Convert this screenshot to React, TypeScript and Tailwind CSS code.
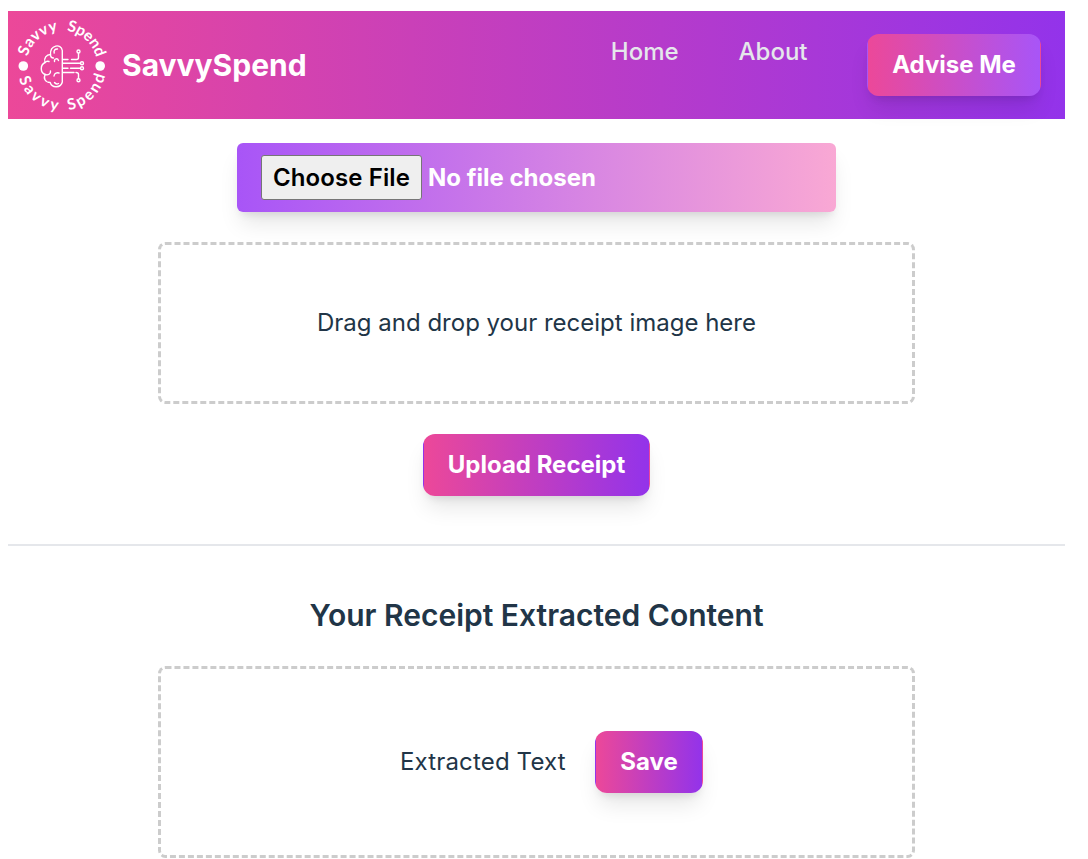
import type { ReactNode } from "react";

function Logo() {
  const arcText = {
    fontFamily: 'Lato, "Open Sans", sans-serif',
    fill: "#fff",
    fontSize: 15.5,
    fontWeight: 700,
    textAnchor: "middle" as const,
  };
  return (
    <svg className="size-[108px] shrink-0" viewBox="0 0 108 108" role="img" aria-label="Savvy Spend">
      <defs>
        <path id="arc-top" d="M18.2 55 A35.5 35.5 0 0 1 89.2 55" />
        <path id="arc-bottom" d="M9.2 55 A44.5 44.5 0 0 0 98.2 55" />
      </defs>
      <text {...arcText} textLength="42" lengthAdjust="spacing">
        <textPath href="#arc-top" startOffset="27.5%">Savvy</textPath>
      </text>
      <text {...arcText} textLength="42" lengthAdjust="spacing">
        <textPath href="#arc-top" startOffset="73.5%">Spend</textPath>
      </text>
      <text {...arcText} textLength="53" lengthAdjust="spacing">
        <textPath href="#arc-bottom" startOffset="28%">Savvy</textPath>
      </text>
      <text {...arcText} textLength="53" lengthAdjust="spacing">
        <textPath href="#arc-bottom" startOffset="74%">Spend</textPath>
      </text>
      <circle cx="15.3" cy="55" r="4.8" fill="#fff" />
      <circle cx="92.2" cy="55" r="4.8" fill="#fff" />
      <g fill="none" stroke="#fff" strokeWidth="1.4" strokeLinecap="round" strokeLinejoin="round">
        <path d="M54.3 39.5 V71 C53 77 44 77.5 42.2 71.5 C37.5 71.5 35 67.5 37.2 63.5 C32 61.5 32 54 37 51.5 C35.5 47 38.5 43.5 42.5 43.5 C42 34 53 32 54.3 39.5 Z" />
        <path d="M46.2 42 C45.5 39.5 47 37.8 49.5 38M42.5 43.5 C42.5 46 44 47 45.5 47M50.5 49.5 C49.5 46.8 46 47.5 46.5 50.5M37 51.5 C38 50.3 39.5 50 41 50.5M37.2 63.5 C40 64.5 43 63 42.5 60M46 65 C46.5 61.8 49 61.5 51 62M46.5 71.5 C47.5 73 49 73.3 50.5 72.5" />
        <path d="M55 48.5 H60M63.5 48.5 H68.5 Q70.5 48.5 70.5 46.5 V42.5M55 52.3 H72.5M55 57.2 H60M62.5 57.2 H72.5M55 61.5 H66M68 61.5 Q70.5 61.5 70.5 63.5 V67.5" />
        <circle cx="70.5" cy="40.5" r="1.5" />
        <circle cx="74" cy="52.3" r="1.5" />
        <circle cx="74" cy="57.2" r="1.5" />
        <circle cx="70.5" cy="69.3" r="1.5" />
      </g>
    </svg>
  );
}

function GradientButton({ className, children }: { className: string; children: ReactNode }) {
  return (
    <button
      type="button"
      className={`h-[62px] shrink-0 rounded-xl border-[1.5px] border-transparent text-2xl leading-9 font-bold text-white shadow-[0_15px_22px_-4px_rgba(0,0,0,0.1),0_6px_9px_-4px_rgba(0,0,0,0.1)] ${className}`}
    >
      {children}
    </button>
  );
}

export default function App() {
  return (
    <div className="h-[859px] w-[1088px] overflow-hidden bg-white pt-[11px] pl-2 font-['Inter',sans-serif] text-2xl leading-9 text-[#213547]">
      <main className="flex w-[1057px] flex-col items-center">
        <header className="flex h-[108px] w-full items-center bg-[linear-gradient(to_right,#ec4899,#9333ea)] pr-6">
          <Logo />
          <span className="ml-1.5 text-[30px] font-bold text-white">SavvySpend</span>
          <nav className="ml-auto flex h-[62px] items-start">
            <a className="mr-[60px] font-medium text-gray-200">Home</a>
            <a className="mr-[59.5px] font-medium text-gray-200">About</a>
            <GradientButton className="w-[174px] bg-[linear-gradient(to_right,#ec4899,#a855f7)]">Advise Me</GradientButton>
          </nav>
        </header>

        <label className="mt-6 flex h-[69px] w-[599px] items-center rounded-md bg-[linear-gradient(to_right,#a855f7,#f9a8d4)] pl-6 shadow-[0_15px_22px_-4px_rgba(0,0,0,0.1),0_6px_9px_-4px_rgba(0,0,0,0.1)]">
          <input type="file" className="hidden" />
          <span className="flex h-[45px] w-[161px] items-center justify-center rounded-[3px] border border-[#767676] bg-[#efefef] font-semibold tracking-[0.1px] text-black">
            Choose File
          </span>
          <span className="ml-1.5 font-bold text-white">No file chosen</span>
        </label>

        <section className="mt-[30px] flex h-[162px] w-[757px] items-center justify-center rounded-[7.5px] border-3 border-dashed border-[#ccc]">
          <p>Drag and drop your receipt image here</p>
        </section>

        <GradientButton className="mt-[30px] w-[227px] bg-[linear-gradient(to_right,#ec4899,#9333ea)]">Upload Receipt</GradientButton>

        <hr className="mt-12 w-full border-t-2 border-[#e5e7eb]" />

        <h2 className="mt-12 text-[30px] leading-[42px] font-semibold">Your Receipt Extracted Content</h2>

        <section className="mt-[30px] flex h-[192px] w-[757px] items-center justify-center gap-[29px] rounded-[7.5px] border-3 border-dashed border-[#ccc] pl-[30px]">
          <p className="w-[166px] tracking-[0.15px] whitespace-nowrap">Extracted Text</p>
          <GradientButton className="w-[108px] bg-[linear-gradient(to_right,#ec4899,#9333ea)]">Save</GradientButton>
        </section>
      </main>
    </div>
  );
}
